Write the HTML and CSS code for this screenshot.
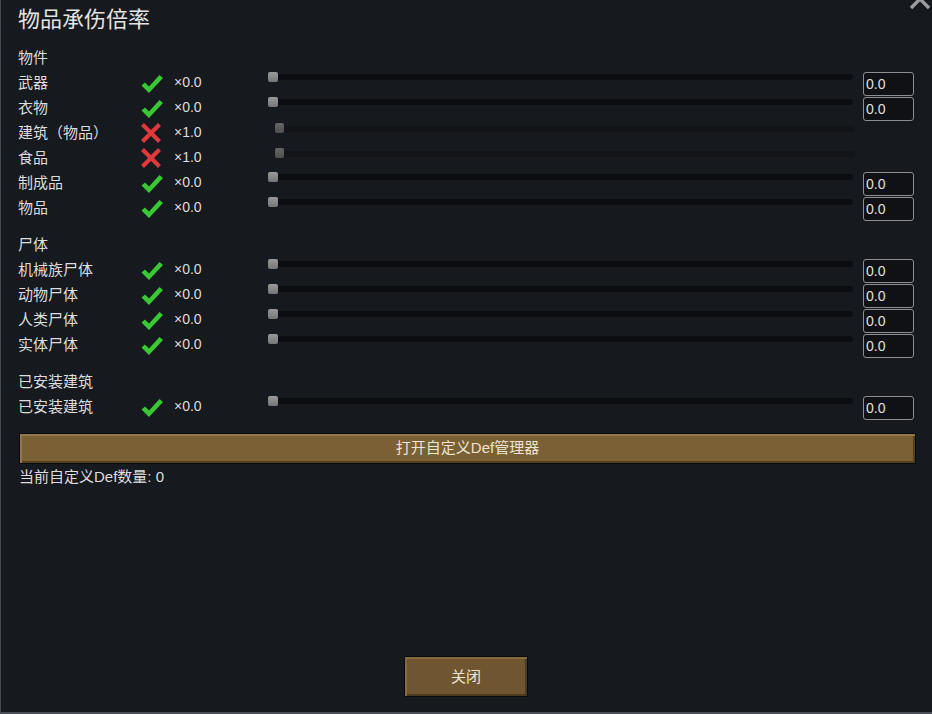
FILE: index.html
```html
<!DOCTYPE html>
<html lang="zh">
<head>
<meta charset="utf-8">
<link rel="stylesheet" href="styles.css">
</head>
<body>
<div class="window">
  <svg class="close-x" width="24" height="24" viewBox="0 0 24 24"><path d="M3 3 L21 21 M21 3 L3 21" stroke="#9a9ca0" stroke-width="3.4" fill="none"/></svg>
  <div class="title">物品承伤倍率</div>

  <div class="section first">物件</div>
  <div class="row"><span class="label">武器</span><span class="icon"><svg class="chk" width="24" height="20" viewBox="0 0 24 20"><path d="M1.5 11.5 L5 8.5 L9 12.5 L19.5 1 L23 4 L9 19 Z" fill="#38c935"/></svg></span><span class="mult">×0.0</span><div class="slider"><div class="track"></div><div class="thumb"></div></div><div class="input">0.0</div></div>
  <div class="row"><span class="label">衣物</span><span class="icon"><svg class="chk" width="24" height="20" viewBox="0 0 24 20"><path d="M1.5 11.5 L5 8.5 L9 12.5 L19.5 1 L23 4 L9 19 Z" fill="#38c935"/></svg></span><span class="mult">×0.0</span><div class="slider"><div class="track"></div><div class="thumb"></div></div><div class="input">0.0</div></div>
  <div class="row"><span class="label">建筑（物品）</span><span class="icon"><svg class="crs" width="22" height="22" viewBox="0 0 22 22"><path d="M2.5 2.5 L19.5 19.5 M19.5 2.5 L2.5 19.5" stroke="#e0393b" stroke-width="4.2" fill="none"/></svg></span><span class="mult">×1.0</span><div class="slider off"><div class="track"></div><div class="thumb"></div></div><div class="input none"></div></div>
  <div class="row"><span class="label">食品</span><span class="icon"><svg class="crs" width="22" height="22" viewBox="0 0 22 22"><path d="M2.5 2.5 L19.5 19.5 M19.5 2.5 L2.5 19.5" stroke="#e0393b" stroke-width="4.2" fill="none"/></svg></span><span class="mult">×1.0</span><div class="slider off"><div class="track"></div><div class="thumb"></div></div><div class="input none"></div></div>
  <div class="row"><span class="label">制成品</span><span class="icon"><svg class="chk" width="24" height="20" viewBox="0 0 24 20"><path d="M1.5 11.5 L5 8.5 L9 12.5 L19.5 1 L23 4 L9 19 Z" fill="#38c935"/></svg></span><span class="mult">×0.0</span><div class="slider"><div class="track"></div><div class="thumb"></div></div><div class="input">0.0</div></div>
  <div class="row"><span class="label">物品</span><span class="icon"><svg class="chk" width="24" height="20" viewBox="0 0 24 20"><path d="M1.5 11.5 L5 8.5 L9 12.5 L19.5 1 L23 4 L9 19 Z" fill="#38c935"/></svg></span><span class="mult">×0.0</span><div class="slider"><div class="track"></div><div class="thumb"></div></div><div class="input">0.0</div></div>

  <div class="section">尸体</div>
  <div class="row"><span class="label">机械族尸体</span><span class="icon"><svg class="chk" width="24" height="20" viewBox="0 0 24 20"><path d="M1.5 11.5 L5 8.5 L9 12.5 L19.5 1 L23 4 L9 19 Z" fill="#38c935"/></svg></span><span class="mult">×0.0</span><div class="slider"><div class="track"></div><div class="thumb"></div></div><div class="input">0.0</div></div>
  <div class="row"><span class="label">动物尸体</span><span class="icon"><svg class="chk" width="24" height="20" viewBox="0 0 24 20"><path d="M1.5 11.5 L5 8.5 L9 12.5 L19.5 1 L23 4 L9 19 Z" fill="#38c935"/></svg></span><span class="mult">×0.0</span><div class="slider"><div class="track"></div><div class="thumb"></div></div><div class="input">0.0</div></div>
  <div class="row"><span class="label">人类尸体</span><span class="icon"><svg class="chk" width="24" height="20" viewBox="0 0 24 20"><path d="M1.5 11.5 L5 8.5 L9 12.5 L19.5 1 L23 4 L9 19 Z" fill="#38c935"/></svg></span><span class="mult">×0.0</span><div class="slider"><div class="track"></div><div class="thumb"></div></div><div class="input">0.0</div></div>
  <div class="row"><span class="label">实体尸体</span><span class="icon"><svg class="chk" width="24" height="20" viewBox="0 0 24 20"><path d="M1.5 11.5 L5 8.5 L9 12.5 L19.5 1 L23 4 L9 19 Z" fill="#38c935"/></svg></span><span class="mult">×0.0</span><div class="slider"><div class="track"></div><div class="thumb"></div></div><div class="input">0.0</div></div>

  <div class="section">已安装建筑</div>
  <div class="row"><span class="label">已安装建筑</span><span class="icon"><svg class="chk" width="24" height="20" viewBox="0 0 24 20"><path d="M1.5 11.5 L5 8.5 L9 12.5 L19.5 1 L23 4 L9 19 Z" fill="#38c935"/></svg></span><span class="mult">×0.0</span><div class="slider"><div class="track"></div><div class="thumb"></div></div><div class="input">0.0</div></div>

  <div class="btn wide">打开自定义Def管理器</div>
  <div class="count">当前自定义Def数量: 0</div>

  <div class="footer"><div class="btn closebtn">关闭</div></div>
</div>
</body>
</html>
```

FILE: styles.css
```css
html, body {
  margin: 0;
  padding: 0;
  background: #16191e;
}
body {
  width: 932px;
  height: 714px;
  overflow: hidden;
  font-family: "Liberation Sans", "Noto Sans CJK SC", sans-serif;
  color: #dddddd;
}
.window {
  position: relative;
  box-sizing: border-box;
  width: 932px;
  height: 714px;
  padding: 0 18px 0 17px;
  border-left: 1px solid #44484f;
  border-bottom: 2px solid #4a4e55;
  display: flex;
  flex-direction: column;
  background: #16191e;
}
.close-x {
  position: absolute;
  right: 0px;
  top: -13px;
}
.title {
  height: 40px;
  line-height: 40px;
  font-size: 22px;
  color: #e4e4e4;
}
.section {
  height: 25px;
  line-height: 25px;
  font-size: 15px;
  margin-top: 12px;
}
.section.first {
  margin-top: 5px;
}
.row {
  display: grid;
  grid-template-columns: 122px 34px 94px 1fr 51px;
  height: 25px;
  align-items: start;
}
.label {
  font-size: 15px;
  line-height: 25px;
  white-space: nowrap;
}
.icon {
  height: 25px;
  display: flex;
  align-items: center;
}
.icon .chk {
  margin-top: 2px;
}
.mult {
  font-size: 14px;
  line-height: 25px;
}
.slider {
  position: relative;
  height: 25px;
  margin-right: 10px;
}
.slider .track {
  margin-top: 4px;
  height: 6px;
  background: #0b0d10;
  border-radius: 3px;
}
.slider .thumb {
  position: absolute;
  left: 0;
  top: 2px;
  width: 10px;
  height: 10px;
  border-radius: 2px;
  background: linear-gradient(#9a9a9a, #767676);
}
.slider.off {
  padding-left: 8px;
  margin-right: 8px;
}
.slider.off .track {
  margin-top: 6px;
  background: #121418;
}
.slider.off .thumb {
  left: 7px;
  top: 3px;
  width: 9px;
  background: linear-gradient(#666, #4f4f4f);
}
.input {
  box-sizing: border-box;
  margin-top: 2px;
  height: 24px;
  border: 1px solid #8c8e92;
  border-radius: 3px;
  background: #0f1114;
  font-size: 14px;
  line-height: 22px;
  padding-left: 2px;
  color: #e0e0e0;
}
.input.none {
  visibility: hidden;
}
.btn {
  box-sizing: border-box;
  border: 1px solid #0a0a0a;
  background: #7b6035;
  box-shadow: inset 2px 2px 0 #94784a, inset -2px -2px 0 #54401f;
  color: #ece4d4;
  text-align: center;
  font-size: 15px;
}
.wide {
  margin-top: 14px;
  margin-left: 1px;
  margin-right: -2px;
  height: 31px;
  line-height: 28px;
}
.count {
  height: 26px;
  line-height: 26px;
  font-size: 15px;
  margin-left: 1px;
}
.footer {
  margin-top: auto;
  margin-bottom: 15px;
  display: flex;
  justify-content: center;
}
.closebtn {
  width: 124px;
  height: 41px;
  line-height: 39px;
  background: #6f5631;
  box-shadow: inset 2px 2px 0 #856a40, inset -2px -2px 0 #4c3a1c;
}
```
